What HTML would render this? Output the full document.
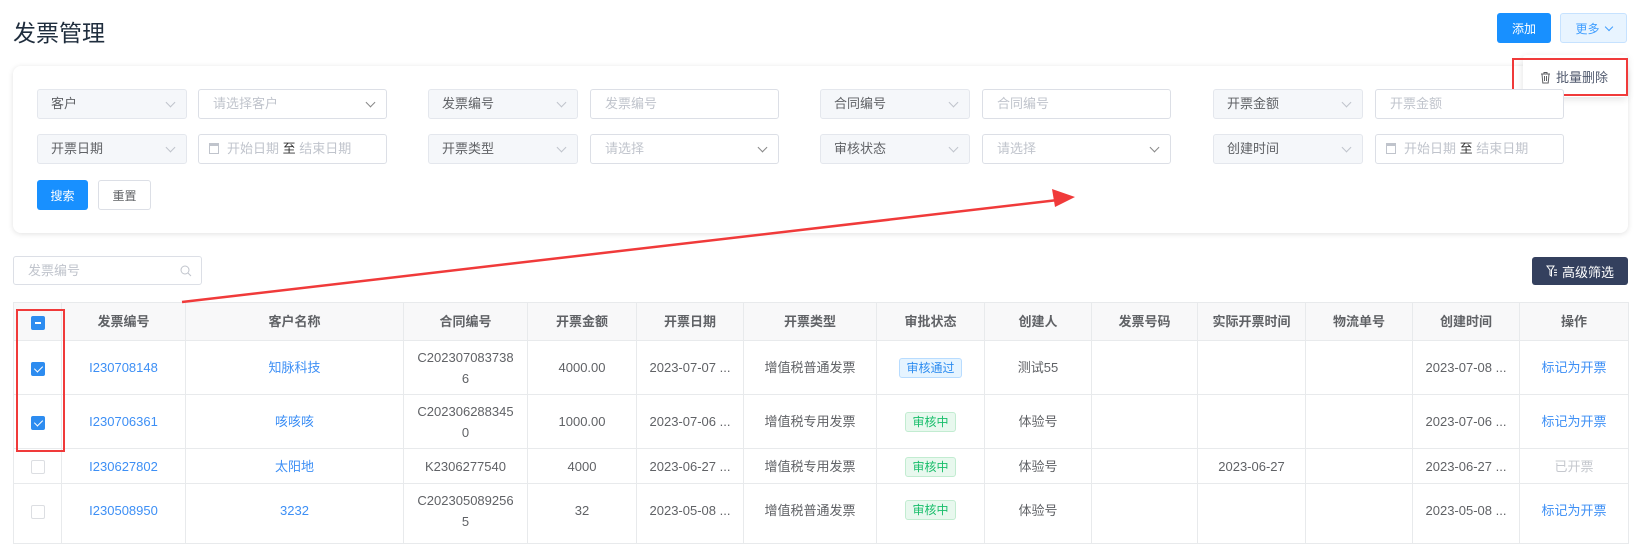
<!DOCTYPE html>
<html><head><meta charset="utf-8"><style>
*{box-sizing:border-box;margin:0;padding:0}
body{width:1634px;height:522px;overflow:hidden;background:#fff;font-family:"Liberation Sans","Noto Sans CJK SC",sans-serif;font-size:13px;color:#606266;position:relative}
.abs{position:absolute}
.title{left:13px;top:14px;font-size:23px;color:#1f2d3d;font-weight:normal}
.btn{position:absolute;border-radius:3px;display:flex;align-items:center;justify-content:center;font-size:12px}
.card{left:13px;top:66px;width:1615px;height:167px;border-radius:8px;box-shadow:0 1px 6px rgba(0,0,0,.12);background:#fff}
.lab{position:absolute;height:30px;width:150px;background:#f5f7fa;border:1px solid #e4e7ed;border-radius:3px;padding-left:13px;line-height:28px;color:#606266;font-size:13px}
.inp{position:absolute;height:30px;width:189px;background:#fff;border:1px solid #dcdfe6;border-radius:3px;padding-left:14px;line-height:28px;color:#c0c4cc;font-size:13px}
.chev{position:absolute;right:12px;top:9px;width:7px;height:7px;border-right:1px solid #c0c4cc;border-bottom:1px solid #c0c4cc;transform:rotate(45deg)}
.inp .chev{border-color:#888}
.cal{display:inline-block;width:10px;height:11px;border:1px solid #c0c4cc;border-top-width:3px;margin-right:8px;vertical-align:-1px}
table{position:absolute;left:13px;top:302px;border-collapse:collapse;table-layout:fixed;width:1615px}
td,th{border:1px solid #e8eaec;text-align:center;font-size:13px;color:#606266;line-height:21px;overflow:hidden;white-space:nowrap}
th{background:#f8f8f9;height:38px;font-weight:bold;color:#606266}
tr.r1 td{height:54px}tr.r3 td{height:35px}tr.r4 td{height:60px;vertical-align:top;padding-top:6px}
.lk{color:#3d8ff5}
.gr{color:#c5c8ce}
.cb{display:inline-block;width:14px;height:14px;border:1px solid #dcdee2;border-radius:2px;background:#fff;vertical-align:middle;position:relative}
.cb.on{background:#2d8cf0;border-color:#2d8cf0}
.cb.on:after{content:"";position:absolute;left:4px;top:1px;width:4px;height:7px;border-right:1.5px solid #fff;border-bottom:1.5px solid #fff;transform:rotate(45deg)}
.cb.ind{background:#2d8cf0;border-color:#2d8cf0}
.cb.ind:after{content:"";position:absolute;left:3px;top:5px;width:6px;height:2px;background:#fff}
.tag{display:inline-block;font-size:12px;line-height:18px;padding:0 6px;border-radius:3px}
.tb{background:#e6f4ff;border:1px solid #b8dcff;color:#2d8cf0}
.tgn{background:#e8f8ee;border:1px solid #c2ecd1;color:#19be6b}
</style></head><body>
<div class="abs title">发票管理</div>
<div class="btn" style="left:1497px;top:13px;width:54px;height:30px;background:#1890ff;color:#fff">添加</div>
<div class="btn" style="left:1560px;top:13px;width:67px;height:30px;background:#e8f4ff;border:1px solid #c6e2ff;color:#409eff">更多 <span style="display:inline-block;width:6px;height:6px;border-right:1px solid #409eff;border-bottom:1px solid #409eff;transform:rotate(45deg);margin:-3px 0 0 6px"></span></div>

<div class="abs card"></div>
<div class="abs" style="left:1523px;top:55px;width:104px;height:42px;background:#fff;box-shadow:0 2px 8px rgba(0,0,0,.12);border-radius:3px"></div>
<div class="abs" style="left:1512px;top:58px;width:116px;height:38px;border:2px solid #f03a3a"></div>
<div class="abs" style="left:1540px;top:67px;font-size:13px;color:#515a6e"><svg width="11" height="13" viewBox="0 0 11 13" style="vertical-align:-2px;margin-right:5px"><path d="M1 3h9M4 3V1.5h3V3M2 3l.8 9h5.4L9 3M4.5 5v5M6.5 5v5" fill="none" stroke="#606266" stroke-width="1"/></svg>批量删除</div>

<div class="lab" style="left:37px;top:89px">客户<i class="chev"></i></div>
<div class="inp" style="left:198px;top:89px">请选择客户<i class="chev"></i></div>
<div class="lab" style="left:428px;top:89px">发票编号<i class="chev"></i></div>
<div class="inp" style="left:590px;top:89px">发票编号</div>
<div class="lab" style="left:820px;top:89px">合同编号<i class="chev"></i></div>
<div class="inp" style="left:982px;top:89px">合同编号</div>
<div class="lab" style="left:1213px;top:89px">开票金额<i class="chev"></i></div>
<div class="inp" style="left:1375px;top:89px">开票金额</div>

<div class="lab" style="left:37px;top:134px">开票日期<i class="chev"></i></div>
<div class="inp" style="left:198px;top:134px;padding-left:10px"><span class="cal"></span>开始日期 <span style="color:#333">至</span> 结束日期</div>
<div class="lab" style="left:428px;top:134px">开票类型<i class="chev"></i></div>
<div class="inp" style="left:590px;top:134px">请选择<i class="chev"></i></div>
<div class="lab" style="left:820px;top:134px">审核状态<i class="chev"></i></div>
<div class="inp" style="left:982px;top:134px">请选择<i class="chev"></i></div>
<div class="lab" style="left:1213px;top:134px">创建时间<i class="chev"></i></div>
<div class="inp" style="left:1375px;top:134px;padding-left:10px"><span class="cal"></span>开始日期 <span style="color:#333">至</span> 结束日期</div>

<div class="btn" style="left:37px;top:180px;width:51px;height:30px;background:#1890ff;color:#fff">搜索</div>
<div class="btn" style="left:98px;top:180px;width:53px;height:30px;border:1px solid #dcdfe6;color:#606266">重置</div>

<div class="inp" style="left:13px;top:256px;width:189px;height:29px;line-height:27px">发票编号<svg class="abs" style="right:9px;top:8px" width="12" height="12" viewBox="0 0 12 12"><circle cx="5" cy="5" r="4" fill="none" stroke="#c0c4cc"/><path d="M8 8l3 3" stroke="#c0c4cc"/></svg></div>
<div class="btn" style="left:1532px;top:257px;width:96px;height:28px;background:#34405e;color:#fff;font-size:13px"><svg width="12" height="12" viewBox="0 0 12 12" style="margin-right:4px"><path d="M1 1h7L5.5 5v6L4 10V5zM8 5h3M8 7.5h3M8 10h3" fill="none" stroke="#fff" stroke-width="1"/></svg>高级筛选</div>

<table>
<colgroup><col style="width:48px"><col style="width:124px"><col style="width:218px"><col style="width:124px"><col style="width:109px"><col style="width:107px"><col style="width:133px"><col style="width:108px"><col style="width:107px"><col style="width:106px"><col style="width:108px"><col style="width:107px"><col style="width:107px"><col style="width:109px"></colgroup>
<tr><th><span class="cb ind"></span></th><th>发票编号</th><th>客户名称</th><th>合同编号</th><th>开票金额</th><th>开票日期</th><th>开票类型</th><th>审批状态</th><th>创建人</th><th>发票号码</th><th>实际开票时间</th><th>物流单号</th><th>创建时间</th><th>操作</th></tr>
<tr class="r1"><td><span class="cb on"></span></td><td class="lk">I230708148</td><td class="lk">知脉科技</td><td>C202307083738<br>6</td><td>4000.00</td><td>2023-07-07 ...</td><td>增值税普通发票</td><td><span class="tag tb">审核通过</span></td><td>测试55</td><td></td><td></td><td></td><td>2023-07-08 ...</td><td class="lk">标记为开票</td></tr>
<tr class="r1"><td><span class="cb on"></span></td><td class="lk">I230706361</td><td class="lk">咳咳咳</td><td>C202306288345<br>0</td><td>1000.00</td><td>2023-07-06 ...</td><td>增值税专用发票</td><td><span class="tag tgn">审核中</span></td><td>体验号</td><td></td><td></td><td></td><td>2023-07-06 ...</td><td class="lk">标记为开票</td></tr>
<tr class="r3"><td><span class="cb"></span></td><td class="lk">I230627802</td><td class="lk">太阳地</td><td>K2306277540</td><td>4000</td><td>2023-06-27 ...</td><td>增值税专用发票</td><td><span class="tag tgn">审核中</span></td><td>体验号</td><td></td><td>2023-06-27</td><td></td><td>2023-06-27 ...</td><td class="gr">已开票</td></tr>
<tr class="r4"><td style="padding-top:16px"><span class="cb"></span></td><td class="lk" style="padding-top:16px">I230508950</td><td class="lk" style="padding-top:16px">3232</td><td>C202305089256<br>5</td><td style="padding-top:16px">32</td><td style="padding-top:16px">2023-05-08 ...</td><td style="padding-top:16px">增值税普通发票</td><td style="padding-top:15px"><span class="tag tgn">审核中</span></td><td style="padding-top:16px">体验号</td><td></td><td></td><td></td><td style="padding-top:16px">2023-05-08 ...</td><td class="lk" style="padding-top:16px">标记为开票</td></tr>
</table>

<div class="abs" style="left:16px;top:309px;width:49px;height:143px;border:2px solid #f03a3a"></div>
<svg class="abs" style="left:0;top:0" width="1634" height="522"><line x1="182" y1="302" x2="1058" y2="200" stroke="#f03a3a" stroke-width="2.5"/><polygon points="1075,197 1052,189 1055,207" fill="#f03a3a"/></svg>
</body></html>
